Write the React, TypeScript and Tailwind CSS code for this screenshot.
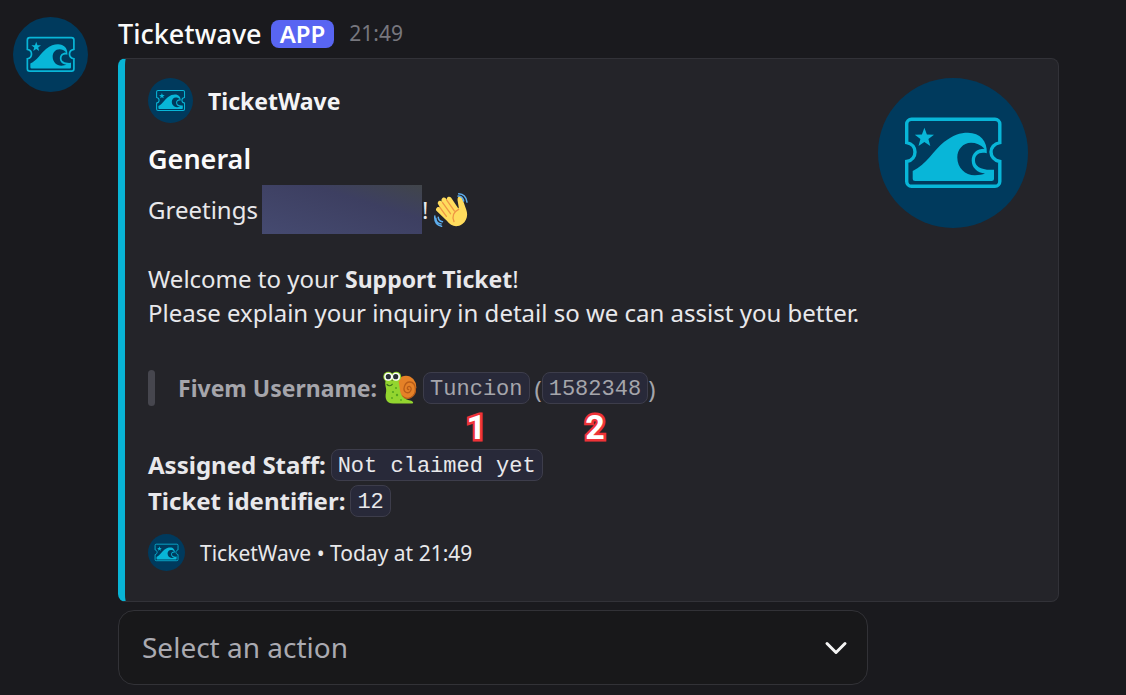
import React from 'react';
import { ChevronDown } from 'lucide-react';

interface LogoProps {
  className: string;
}

const Logo: React.FC<LogoProps> = ({ className }) => (
  <svg viewBox="0 0 150 150" className={className} aria-hidden="true">
    <circle cx="75" cy="75" r="75" fill="#003a5d" />
    <path
      d="M33.5 41.3H117a4.8 4.8 0 0 1 4.8 4.8V64.6C116 65.5 113 70 113 74S116 82.5 121.8 83.5V103.5a4.800 4.800 0 0 1-4.800 4.800H33.500a4.800 4.800 0 0 1-4.800-4.800V83.500C34.500 82.500 37 78 37 74S34.500 65.500 28.700 64.600V46.100a4.800 4.800 0 0 1 4.800-4.800Z"
      fill="none"
      stroke="#08b6d8"
      strokeWidth="3.4"
    />
    <path d="M46.400 49.700L48.900 56.400L56 56.700L50.400 61.100L52.300 67.900L46.400 64L40.500 67.900L42.400 61.100L36.800 56.700L43.900 56.400Z" fill="#08b6d8" />
    <path
      d="M34.7 93C48 87 56 72 66 64C75 57 82 54.700 90 54.700C102 54.700 109.500 63 108.800 75.300C101 73.500 97 77 97 82.500C97 88.500 103 92.500 116 91.700V100.500Q116 103 113.500 103H37.200Q34.700 103 34.700 100.500Z"
      fill="#08b6d8"
    />
    <path
      d="M106.500 70.800C102.500 66.500 98 64.700 93 64.700C85 64.700 79.300 71.500 79.300 79.500C79.300 90 87.500 97.500 97 97.300C101 97.300 104.500 96.600 107 95.600C99 94.800 93.700 89.500 93.700 82.500C93.700 75.500 98.500 70.800 106.500 70.800Z"
      fill="#003a5d"
    />
  </svg>
);

const WavingHand: React.FC = () => (
  <svg viewBox="0 0 36 36" className="size-[34px]" role="img" aria-label="Waving hand">
    <g transform="translate(-2.400 -3.500) scale(1.150)">
      <path
        d="M4.900 16.300c.9-.7 2.200-.5 3 .5L5.900 13.500c-.7-1-.4-2.300.6-3 1-.6 2.300-.4 3 .6l.7 1-.9-1.400c-.7-1-.4-2.400.6-3.100 1.100-.7 2.500-.4 3.200.6l1 1.500c-.5-1.100-.2-2.300.8-2.900 1-.6 2.300-.3 3 .7l6.600 9.800.4-1-1.100-6.400c-.3-1.900.6-3.600 2.100-3.800 1.400-.2 2 1 2.500 2.700l3.400 9.600c1.900 5.300.3 10.300-3.600 13.200-4.900 3.600-10.600 2.300-14.300-3L4.300 19.400c-.8-1.100-.4-2.400.6-3.100z"
        fill="#ffdc5d"
      />
      <path
        d="M7.500 16.300l6 8.300M10 11.800l7.300 10.300M13.800 9.700l7 9.700M24.800 18.200c-4.500 2-6.500 6.300-4.300 11.200"
        fill="none"
        stroke="#ef9645"
        strokeWidth="1.200"
        strokeLinecap="round"
      />
    </g>
    <path
      d="M25.500 3.300c3 .2 5.200 2.100 5.900 5.200M26.200.9c5.100.3 8 3.700 8.700 8.700M1.900 26.800c.2 3.500 2.300 5.600 5.600 5.900M.9 24.400c-.6 6 2 9.800 7.100 10.800M4.500 25.800c.3 2.400 1.800 4.200 4.500 4.600"
      fill="none"
      stroke="#5dadec"
      strokeWidth="1.600"
      strokeLinecap="round"
    />
  </svg>
);

const Snail: React.FC = () => (
  <svg viewBox="0 0 34 34" className="size-[34px]" role="img" aria-label="Snail">
    <ellipse cx="23" cy="16.200" rx="10.300" ry="11.500" fill="#e58127" />
    <path
      d="M16 22c3 4.500 8 6.500 12 4.500 6.500-3.500 5.500-15-1-15.500-5.500-.4-8 8.500-3.800 10.500 4.300 1.500 6.800-5 3.300-6-2.600-.5-2.800 3.200-.8 3"
      fill="none"
      stroke="#b85c19"
      strokeWidth="1.300"
      strokeLinecap="round"
    />
    <path d="M2.500 10C1.500 15 4 17 3 21.500C1.500 28 4 32.500 10 32.500H29.500C31.200 31.400 29.500 29.600 26 29.200C20 28 17.500 24 17 19L15.500 9Z" fill="#93d52f" />
    <path d="M4 13.500c1.500 1.800 4.200 1.600 5.300-.2" fill="none" stroke="#3c731c" strokeWidth="1.200" strokeLinecap="round" />
    <g fill="#55a51e">
      <circle cx="13" cy="17" r="1" />
      <circle cx="10" cy="21" r="1.100" />
      <circle cx="14" cy="24" r="1.200" />
      <circle cx="9" cy="27" r=".9" />
      <circle cx="18" cy="29" r=".9" />
    </g>
    <circle cx="5.300" cy="5.700" r="5" fill="#93d52f" />
    <circle cx="13.200" cy="5.700" r="5" fill="#93d52f" />
    <circle cx="5.300" cy="5.700" r="4" fill="#fff" />
    <circle cx="13" cy="5.700" r="4" fill="#fff" />
    <circle cx="5.300" cy="5.700" r="2.600" fill="#293036" />
    <circle cx="12.700" cy="5.700" r="2.600" fill="#293036" />
  </svg>
);

const Chip: React.FC<{ marker?: string; children: React.ReactNode }> = ({ marker, children }) => (
  <code className="relative inline-flex h-8 items-center rounded-lg border border-[#3d3d4b] bg-[#282939] px-[6px] pt-1 font-['Liberation_Mono',monospace] text-[22px] leading-6 whitespace-pre">
    {children}
    {marker && (
      <span className="absolute top-full left-1/2 mt-1 -translate-x-1/2 font-['Roboto',sans-serif] text-[34px] leading-10 font-bold text-white [-webkit-text-stroke:5px_#ef3338] [paint-order:stroke_fill]">
        {marker}
      </span>
    )}
  </code>
);

const Embed: React.FC = () => (
  <article className="flex justify-between rounded-lg border border-l-[7px] border-[#323238] border-l-[#08b4d5] bg-[#242429] pt-[19px] pr-[30px] pb-[30px] pl-[23px]">
    <div className="min-w-0">
      <div className="flex items-center gap-[15px]">
        <Logo className="size-[45px] shrink-0" />
        <span className="text-[23px] leading-8 font-bold text-[#f4f4f6]">TicketWave</span>
      </div>
      <h2 className="mt-4 text-[27px] leading-10 font-semibold text-[#fbfbfb]">General</h2>
      <p className="mt-[6px] flex items-center">
        <span className="mr-1">Greetings</span>
        <span className="h-[49px] w-40 bg-linear-to-tr from-[#454a70] via-[#3d3f61] via-65% to-[#41454a]" />
        <span className="mr-[6px]">!</span>
        <WavingHand />
      </p>
      <p className="mt-7">
        Welcome to your <strong className="text-[23px]">Support Ticket</strong>!
        <br />
        Please explain your inquiry in detail so we can assist you better.
      </p>
      <blockquote className="mt-[41px] flex h-9 items-center text-[#a5a5ab]">
        <span className="mr-[23px] h-full w-[7px] rounded-sm bg-[#46464e]" />
        <strong className="mr-[6px] text-[23px]">Fivem Username:</strong>
        <Snail />
        <span className="ml-[6px] flex items-center">
          <Chip marker="1">Tuncion</Chip>
          <span className="ml-[5px]">(</span>
          <Chip marker="2">1582348</Chip>)
        </span>
      </blockquote>
      <dl className="mt-[41px] leading-9">
        <div className="flex items-center gap-[5px]">
          <dt className="font-bold">Assigned Staff:</dt>
          <dd className="flex"><Chip>Not claimed yet</Chip></dd>
        </div>
        <div className="flex items-center gap-[5px]">
          <dt className="font-bold">Ticket identifier:</dt>
          <dd className="flex"><Chip>12</Chip></dd>
        </div>
      </dl>
      <footer className="mt-[15px] flex items-center gap-[15px] text-[21px] leading-8">
        <Logo className="size-[37px] shrink-0" />
        <span>TicketWave • Today at 21:49</span>
      </footer>
    </div>
    <Logo className="-ml-6 size-[150px] shrink-0" />
  </article>
);

const App: React.FC = () => {
  return (
    <main className="flex min-h-screen gap-[30px] bg-[#1a1a1e] pt-[17px] pr-[67px] pb-[10px] pl-[13px] font-['Noto_Sans',sans-serif] text-[24px] leading-[33px] text-[#e8e8eb]">
      <Logo className="size-[75px] shrink-0" />
      <div className="min-w-0 flex-1">
        <header className="mb-2 flex items-center">
          <span className="text-[27px] font-medium text-[#fbfbfb]">Ticketwave</span>
          <span className="ml-[9px] flex h-7 items-center rounded-lg bg-[#5865f2] px-[9px] text-[24px] font-semibold text-white">APP</span>
          <time className="ml-[15px] text-[21px] text-[#77777e]">21:49</time>
        </header>
        <Embed />
        <div className="relative mt-2 max-w-[750px]">
          <select
            aria-label="Select an action"
            defaultValue=""
            className="h-[75px] w-full appearance-none rounded-2xl border border-[#323237] bg-[#18181a] px-[23px] text-[28px] text-[#aaaab1]"
          >
            <option value="">Select an action</option>
          </select>
          <ChevronDown className="pointer-events-none absolute top-5 right-[14px] size-9 text-[#f4f4f4]" strokeWidth={2} />
        </div>
      </div>
    </main>
  );
};

export default App;
